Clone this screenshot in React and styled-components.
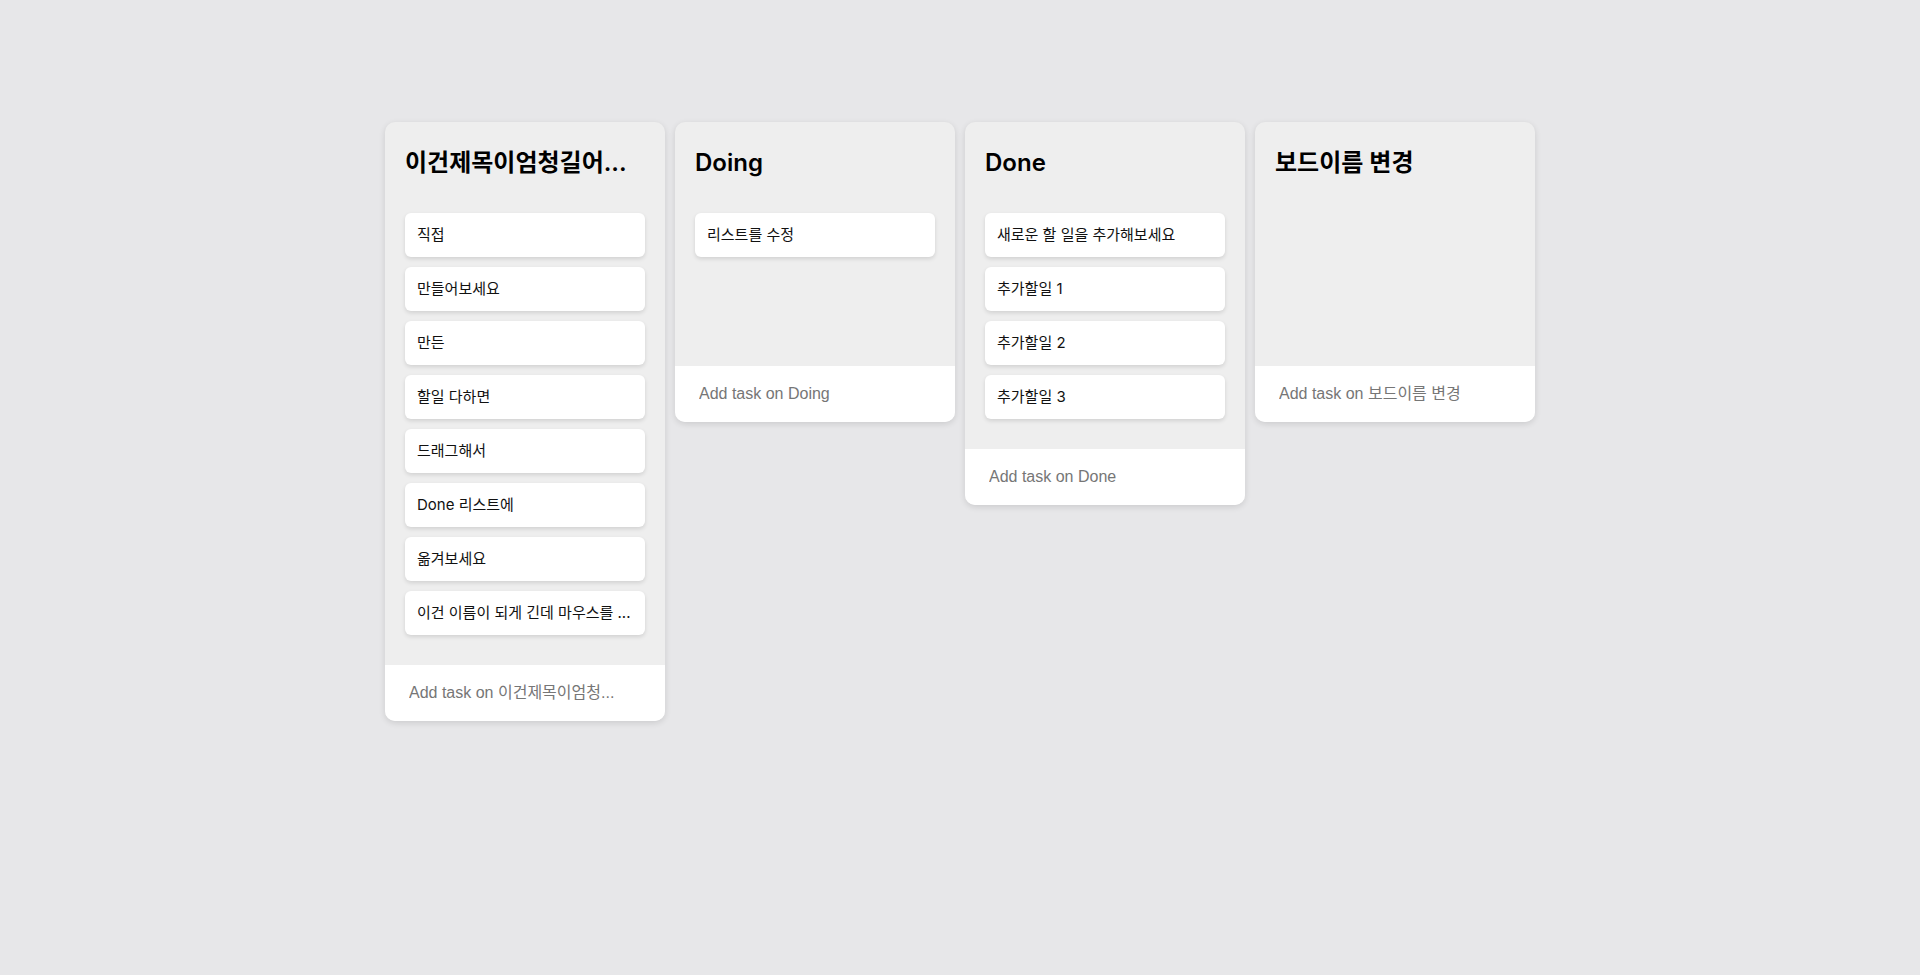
import React from "react";
import styled, { createGlobalStyle } from "styled-components";

const GlobalStyle = createGlobalStyle`
	* {
		box-sizing: border-box;
	}
	body {
		margin: 0;
		background: #e7e7e9;
		font-family: Inter, "Noto Sans CJK KR", sans-serif;
		color: #111;
	}
`;

const Page = styled.main`
	min-height: 975px;
	padding-top: 122px;
	display: flex;
	justify-content: center;
	align-items: flex-start;
	gap: 10px;
`;

const BoardWrapper = styled.section`
	width: 280px;
	background: #eeeeee;
	border-radius: 10px;
	box-shadow: 0 2px 6px rgba(0, 0, 0, 0.12);
	overflow: hidden;
	display: flex;
	flex-direction: column;
`;

const Title = styled.h2`
	margin: 0;
	padding: 21px 20px 0;
	height: 91px;
	font-size: 24px;
	font-weight: 600;
	line-height: 40px;
	color: #000;
	white-space: nowrap;
	overflow: hidden;
`;

const TaskList = styled.ul`
	list-style: none;
	margin: 0;
	padding: 0 20px 30px;
	min-height: 153px;
	display: flex;
	flex-direction: column;
	gap: 10px;
`;

const Task = styled.li`
	background: #fff;
	border-radius: 6px;
	box-shadow: 0 2px 4px rgba(0, 0, 0, 0.12);
	padding: 12px 12px;
	height: 44px;
	font-size: 15px;
	line-height: 20px;
	color: #111;
	white-space: nowrap;
	overflow: hidden;
`;

const AddTask = styled.input`
	display: block;
	width: 100%;
	height: 56px;
	border: none;
	outline: none;
	background: #fff;
	padding: 0 24px;
	font-family: "Liberation Sans", Arial, "Noto Sans CJK KR", sans-serif;
	font-size: 16px;
	color: #111;
	&::placeholder {
		color: #767676;
	}
`;

const boards = [
	{
		title: "이건제목이엄청길어...",
		placeholder: "Add task on 이건제목이엄청...",
		tasks: [
			"직접",
			"만들어보세요",
			"만든",
			"할일 다하면",
			"드래그해서",
			"Done 리스트에",
			"옮겨보세요",
			"이건 이름이 되게 긴데 마우스를 ...",
		],
	},
	{
		title: "Doing",
		placeholder: "Add task on Doing",
		tasks: ["리스트를 수정"],
	},
	{
		title: "Done",
		placeholder: "Add task on Done",
		tasks: ["새로운 할 일을 추가해보세요", "추가할일 1", "추가할일 2", "추가할일 3"],
	},
	{
		title: "보드이름 변경",
		placeholder: "Add task on 보드이름 변경",
		tasks: [],
	},
];

const Board = ({ board }) => (
	<BoardWrapper>
		<Title>{board.title}</Title>
		<TaskList>
			{board.tasks.map((task, i) => (
				<Task key={i}>{task}</Task>
			))}
		</TaskList>
		<AddTask placeholder={board.placeholder} />
	</BoardWrapper>
);

const App = () => (
	<>
		<GlobalStyle />
		<Page>
			{boards.map((board) => (
				<Board key={board.title} board={board} />
			))}
		</Page>
	</>
);

export default App;
